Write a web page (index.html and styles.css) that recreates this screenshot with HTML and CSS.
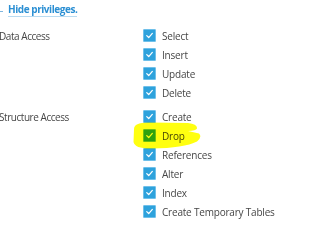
FILE: index.html
```html
<!DOCTYPE html>
<html>
<head>
<meta charset="utf-8">
<link rel="stylesheet" href="styles.css">
</head>
<body>
<div class="page">
  <div class="toggle"><span class="dash"></span><a class="toggle-link" href="#">Hide privileges.</a></div>

  <div class="group">
    <div class="label">Data Access</div>
    <ul class="opts">
      <li><span class="cb"><svg viewBox="0 0 14 14"><path d="M3.5 7.2 L6 9.6 L10.6 4.4"/></svg></span>Select</li>
      <li><span class="cb"><svg viewBox="0 0 14 14"><path d="M3.5 7.2 L6 9.6 L10.6 4.4"/></svg></span>Insert</li>
      <li><span class="cb"><svg viewBox="0 0 14 14"><path d="M3.5 7.2 L6 9.6 L10.6 4.4"/></svg></span>Update</li>
      <li><span class="cb"><svg viewBox="0 0 14 14"><path d="M3.5 7.2 L6 9.6 L10.6 4.4"/></svg></span>Delete</li>
    </ul>
  </div>

  <div class="group second">
    <div class="label">Structure Access</div>
    <ul class="opts">
      <li><span class="cb"><svg viewBox="0 0 14 14"><path d="M3.5 7.2 L6 9.6 L10.6 4.4"/></svg></span>Create</li>
      <li><span class="cb"><svg viewBox="0 0 14 14"><path d="M3.5 7.2 L6 9.6 L10.6 4.4"/></svg></span>Drop</li>
      <li><span class="cb"><svg viewBox="0 0 14 14"><path d="M3.5 7.2 L6 9.6 L10.6 4.4"/></svg></span>References</li>
      <li><span class="cb"><svg viewBox="0 0 14 14"><path d="M3.5 7.2 L6 9.6 L10.6 4.4"/></svg></span>Alter</li>
      <li><span class="cb"><svg viewBox="0 0 14 14"><path d="M3.5 7.2 L6 9.6 L10.6 4.4"/></svg></span>Index</li>
      <li><span class="cb"><svg viewBox="0 0 14 14"><path d="M3.5 7.2 L6 9.6 L10.6 4.4"/></svg></span>Create Temporary Tables</li>
    </ul>
  </div>
</div>

<svg class="marker" width="300" height="219" viewBox="0 0 300 219">
  <path d="M134,129 Q134,122.5 148,122.5 L188,123 Q197.5,124 197,128.5 Q196,130.5 188,131 L199,133.5 Q202.5,137 197,141.5 Q184,148 152,148.5 Q135,149 133.5,142 Z"/>
</svg>
</body>
</html>
```
FILE: styles.css
```css
html, body {
  margin: 0;
  padding: 0;
  background: #ffffff;
  overflow: hidden;
}

.page {
  width: 300px;
  height: 219px;
  font-family: "Open Sans", "Noto Sans", sans-serif;
  font-size: 10px;
  color: #464646;
}

.toggle {
  display: flex;
  align-items: center;
  height: 17px;
}

.dash {
  width: 3px;
  height: 1px;
  background: #7fb6de;
  margin-top: 5px;
  margin-right: 5px;
}

.toggle-link {
  font-weight: 700;
  font-size: 10px;
  letter-spacing: -0.45px;
  color: #2b8fd3;
  text-decoration: none;
  border-bottom: 1px solid #b9dbf1;
  line-height: 13px;
  margin-top: 3px;
}

.group {
  display: grid;
  grid-template-columns: 144px 1fr;
  margin-left: -1px;
  margin-top: 9px;
}

.group.second {
  margin-top: 5px;
}

.label {
  line-height: 20px;
  letter-spacing: -0.45px;
}

.opts {
  list-style: none;
  margin: 0;
  padding: 0;
}

.opts li {
  display: flex;
  align-items: center;
  height: 19px;
  white-space: nowrap;
  letter-spacing: -0.2px;
}

.cb {
  display: block;
  width: 13px;
  height: 13px;
  box-sizing: border-box;
  background: #2ea2dc;
  border: 1px solid #6fc0ea;
  border-radius: 1px;
  margin-right: 6px;
  flex: none;
}

.cb svg {
  display: block;
  width: 11px;
  height: 11px;
}

.cb path {
  fill: none;
  stroke: #ffffff;
  stroke-width: 1.6;
  stroke-linecap: round;
  stroke-linejoin: round;
}

.marker {
  position: absolute;
  left: 0;
  top: 0;
  mix-blend-mode: multiply;
  pointer-events: none;
}

.marker path {
  fill: #ffff10;
}
```
